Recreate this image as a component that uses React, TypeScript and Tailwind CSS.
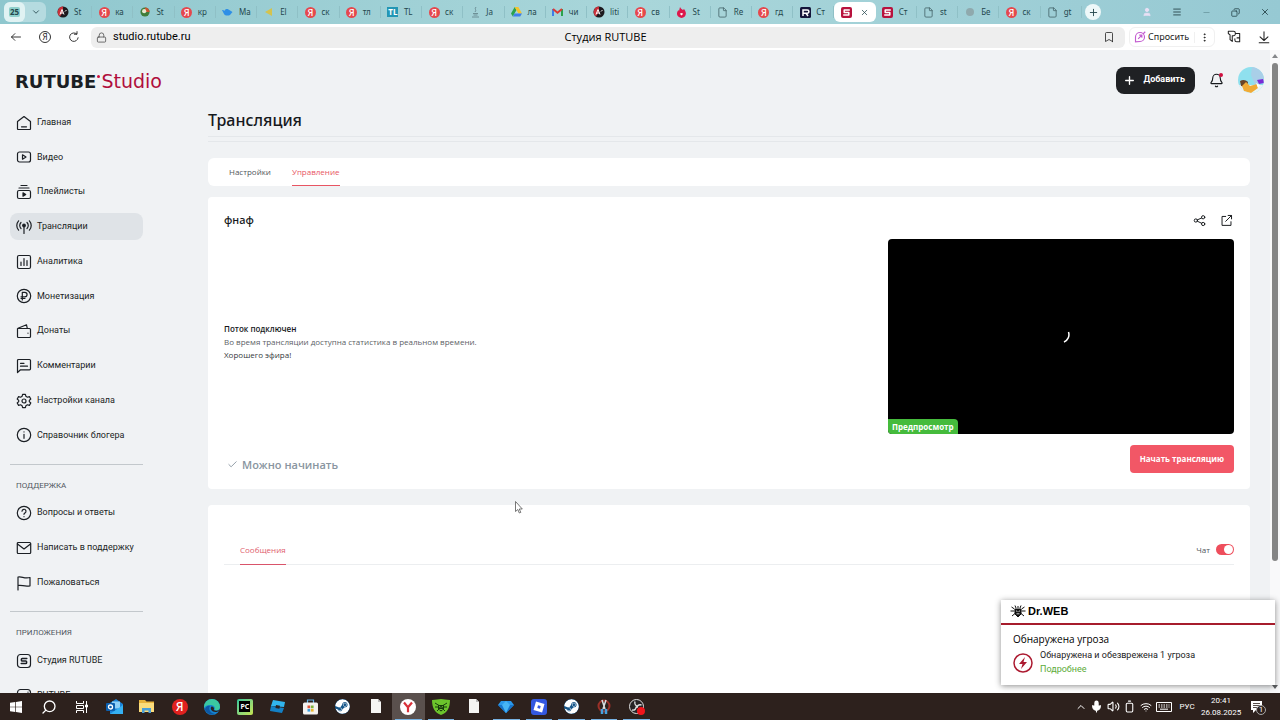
import type { ReactNode } from "react";
import {
  Battery,
  Bell,
  Bookmark,
  Check,
  ChevronDown,
  ChevronUp,
  Copy,
  EllipsisVertical,
  File,
  Lock,
  Menu,
  Mic,
  Minus,
  Plus,
  Search,
  User,
  Volume2,
  Wifi,
  X,
} from "lucide-react";
import { FaSteam } from "react-icons/fa";

const Line = ({ children, size = 16 }: { children: ReactNode; size?: number }) => (
  <svg
    width={size}
    height={size}
    viewBox="0 0 16 16"
    fill="none"
    stroke="currentColor"
    strokeWidth="1.2"
    strokeLinecap="round"
    strokeLinejoin="round"
    className="shrink-0"
    aria-hidden="true"
  >
    {children}
  </svg>
);

const Ya = ({ big = false }: { big?: boolean }) => (
  <span
    className={
      big
        ? "flex size-4 items-center justify-center rounded-full bg-[#e0211f] text-[12px] leading-none font-medium text-white"
        : "flex size-[11px] items-center justify-center rounded-full bg-[#e5484d] text-[9px] leading-none font-medium text-white"
    }
  >
    Я
  </span>
);

const Anime = () => (
  <svg width="12" height="12" viewBox="0 0 12 12" aria-hidden="true">
    <circle cx="6" cy="6" r="5.5" fill="#1d1a1e" />
    <path d="M6 .5a5.500 5.500 0 0 0-3 10L6 6z" fill="#c8313a" />
    <path d="M3 8.500 5 3.500l2 5M3.800 7h2.500M8 5.500l1.500-1.500" stroke="#fff" fill="none" />
  </svg>
);

const Globe = () => (
  <svg width="10" height="10" viewBox="0 0 12 12" aria-hidden="true">
    <circle cx="6" cy="6" r="5.500" fill="#3f7d3a" />
    <path d="M6 .5A5.500 5.500 0 0 1 11.500 6L6 6z" fill="#c9542f" />
    <circle cx="5" cy="5" r="2.500" fill="#e8e6cf" />
  </svg>
);

const RutubeR = () => (
  <svg width="11" height="11" viewBox="0 0 11 11" aria-hidden="true">
    <rect width="11" height="11" rx="1.500" fill="#14153a" />
    <path d="M3 9V3h4.300a1.300 1.300 0 0 1 0 3.200H3M6 6.200 8 9" fill="none" stroke="#fff" strokeWidth="1.500" />
  </svg>
);

const StudioS = () => (
  <svg width="11" height="11" viewBox="0 0 11 11" aria-hidden="true">
    <rect width="11" height="11" rx="2" fill="#b8123d" />
    <path d="M8.800 3H3.200v2.500h4.600V8H2.200" fill="none" stroke="#fff" strokeWidth="1.500" strokeLinejoin="round" />
  </svg>
);

const PageIcon = () => <File size={11} strokeWidth={1.800} className="text-[#45656a]" />;

const browserTabs: { icon: ReactNode; text: string; active?: boolean }[] = [
  { icon: <Anime />, text: "St" },
  { icon: <Ya />, text: "ка" },
  { icon: <Globe />, text: "St" },
  { icon: <Ya />, text: "кр" },
  {
    icon: (
      <svg width="11" height="9" viewBox="0 0 11 9" aria-hidden="true">
        <path d="M0 2c1 0 2 .3 2.500 1C3 1 5 .5 6.500 1.500L10.500 4 8 7c-2 1-5 .8-6-1z" fill="#2f8fe6" />
      </svg>
    ),
    text: "Ма",
  },
  {
    icon: (
      <svg width="8" height="8" viewBox="0 0 8 8" aria-hidden="true">
        <path d="M7 0v8L0 4z" fill="#d4c34e" />
      </svg>
    ),
    text: "El",
  },
  { icon: <Ya />, text: "ск" },
  { icon: <Ya />, text: "тл" },
  {
    icon: (
      <span className="flex h-[10px] w-[11px] items-center justify-center bg-[#2396b4] text-[8px] leading-none font-bold text-white">
        TL
      </span>
    ),
    text: "TL",
  },
  { icon: <Ya />, text: "ск" },
  {
    icon: (
      <svg width="9" height="11" viewBox="0 0 9 11" fill="none" stroke="#66888e" strokeWidth=".9" aria-hidden="true">
        <path d="M5 0C3 2 6 3 4 5M2 6.500h5M2.500 8h4M1 10h7" />
      </svg>
    ),
    text: "Ja",
  },
  {
    icon: (
      <svg width="11" height="10" viewBox="0 0 11 10" aria-hidden="true">
        <path d="M3.700 0 0 6.500 1.800 9.500 5.500 3z" fill="#2ba24c" />
        <path d="M3.700 0h3.600L11 6.500H7.400z" fill="#f5c32c" />
        <path d="M3.600 6.500H11l-1.800 3H1.800z" fill="#3f7ee8" />
      </svg>
    ),
    text: "ла",
  },
  {
    icon: (
      <svg width="11" height="8" viewBox="0 0 11 8" fill="none" strokeWidth="2" aria-hidden="true">
        <path d="M1 8V1" stroke="#3f7ee8" />
        <path d="M10 8V1" stroke="#2ba24c" />
        <path d="m1 1 4.500 3.800L10 1" stroke="#dc3a35" />
      </svg>
    ),
    text: "чи",
  },
  { icon: <Anime />, text: "liti" },
  { icon: <Ya />, text: "св" },
  {
    icon: (
      <svg width="9" height="11" viewBox="0 0 9 11" aria-hidden="true">
        <path d="M3 0c1 2 2 2 3 3l1-1c4 5 1 9-2.500 9S-2 7 1.500 3L2 4z" fill="#dd174b" />
        <path d="M4.500 8.500 2.800 6.800 4.500 6l1.700.8z" fill="#fff" />
      </svg>
    ),
    text: "St",
  },
  { icon: <PageIcon />, text: "Re" },
  { icon: <Ya />, text: "гд" },
  { icon: <RutubeR />, text: "Ст" },
  { icon: <StudioS />, text: "", active: true },
  { icon: <StudioS />, text: "Ст" },
  { icon: <PageIcon />, text: "st" },
  { icon: <span className="size-2 rounded-full bg-[#8fa9ad]" />, text: "Бе" },
  { icon: <Ya />, text: "ск" },
  { icon: <PageIcon />, text: "gt" },
];

const menu: { text: string; icon: ReactNode; active?: boolean }[] = [
  {
    text: "Главная",
    icon: <path d="M1.500 6.500 8 1.500l6.500 5v7.300a.7.700 0 0 1-.7.700H2.200a.7.700 0 0 1-.7-.7zM5.500 11.800h5" />,
  },
  {
    text: "Видео",
    icon: (
      <>
        <rect x="1.500" y="3" width="13" height="10" rx="2" />
        <path d="M6.500 5.800v4.400L10 8z" />
      </>
    ),
  },
  {
    text: "Плейлисты",
    icon: (
      <>
        <rect x="1.500" y="6.500" width="13" height="8" rx="1.500" />
        <path d="M3 4h10M5 1.500h6" />
        <path d="M7 8.800v3.400L9.700 10.500z" fill="currentColor" />
      </>
    ),
  },
  {
    text: "Трансляции",
    active: true,
    icon: (
      <>
        <circle cx="8" cy="6.500" r="1.300" fill="currentColor" />
        <path d="M8 7v7.500M5 9.500a4.200 4.200 0 0 1 0-6M11 9.500a4.200 4.200 0 0 0 0-6M2.600 11.200a7 7 0 0 1 0-9.400M13.400 11.200a7 7 0 0 0 0-9.400" />
      </>
    ),
  },
  {
    text: "Аналитика",
    icon: (
      <>
        <rect x="1.500" y="1.500" width="13" height="13" rx="1.500" />
        <path d="M5 8v3.500M8 4.500v7M11 6.500v5" />
      </>
    ),
  },
  {
    text: "Монетизация",
    icon: (
      <>
        <circle cx="8" cy="8" r="6.700" />
        <path d="M6.300 12V4.300h2.500a2.200 2.200 0 0 1 0 4.500H5M5 10.500h4" />
      </>
    ),
  },
  {
    text: "Донаты",
    icon: (
      <>
        <path d="M1.500 5.500h12a1 1 0 0 1 1 1v7a1 1 0 0 1-1 1h-11a1 1 0 0 1-1-1zM2 5.300l8.500-3.500.8 3.500M12 10v.2" />
      </>
    ),
  },
  {
    text: "Комментарии",
    icon: <path d="M1.500 14.500V2.500a1 1 0 0 1 1-1h11a1 1 0 0 1 1 1v8.300a1 1 0 0 1-1 1H4.500zM4.500 5.300H8M4.500 8.200h7" />,
  },
  {
    text: "Настройки канала",
    icon: (
      <>
        <path d="M6.600 1.300h2.800l.5 2 1.500.9 2-.6 1.400 2.400-1.500 1.400v1.200l1.500 1.400-1.400 2.400-2-.6-1.500.9-.5 2H6.600l-.5-2-1.500-.9-2 .6L1.200 10l1.500-1.400V7.400L1.200 6l1.400-2.400 2 .6 1.500-.9z" />
        <circle cx="8" cy="8" r="2" />
      </>
    ),
  },
  {
    text: "Справочник блогера",
    icon: (
      <>
        <circle cx="8" cy="8" r="6.700" />
        <path d="M8 7.300v4M8 4.800v.2" />
      </>
    ),
  },
];

const support: { text: string; icon: ReactNode }[] = [
  {
    text: "Вопросы и ответы",
    icon: (
      <>
        <circle cx="8" cy="8" r="6.700" />
        <path d="M6 6.200a2 2 0 1 1 2.800 1.900c-.6.300-.8.600-.8 1.200M8 11.500v.2" />
      </>
    ),
  },
  {
    text: "Написать в поддержку",
    icon: (
      <>
        <rect x="1.300" y="2.500" width="13.400" height="11" rx="1" />
        <path d="m1.500 4 6.500 5 6.500-5" />
      </>
    ),
  },
  {
    text: "Пожаловаться",
    icon: <path d="M2 15V2c4-1 6 2 12 .5v8.300c-6 1.200-8-1.300-12-.3" />,
  },
];

const apps: { text: string; icon: ReactNode }[] = [
  {
    text: "Студия RUTUBE",
    icon: (
      <>
        <rect x="1.500" y="1.500" width="13" height="13" rx="3" />
        <path d="M10.800 5.500H6.200a.8.800 0 0 0-.8.800v.9c0 .4.400.8.800.8h3.600c.4 0 .8.400.8.800v.9c0 .4-.4.800-.8.800H5.200" strokeWidth="1.500" />
      </>
    ),
  },
  {
    text: "RUTUBE",
    icon: (
      <>
        <rect x="1.500" y="1.500" width="13" height="13" rx="3" />
        <path d="M5 11V5.500h4.500a1.500 1.500 0 0 1 0 3H5M8.500 8.500 11 11M12 4v.2" />
      </>
    ),
  },
];

const SideItem = ({ text, icon, active }: { text: string; icon: ReactNode; active?: boolean }) => (
  <a
    href="#"
    className={
      active
        ? "flex h-[27px] shrink-0 items-center gap-[5px] rounded-lg bg-[#dfe3e7] pl-[6px]"
        : "flex h-[27px] shrink-0 items-center gap-[5px] pl-[6px]"
    }
  >
    <Line>{icon}</Line>
    <span className="whitespace-nowrap">{text}</span>
  </a>
);

const Doc = () => (
  <svg width="12" height="15" viewBox="0 0 12 15" aria-hidden="true">
    <path d="M1 0h7l3 3v11H1z" fill="#f5f5f3" />
    <path d="M8 0v3h3" fill="#bbb" />
  </svg>
);

const Steam = () => <FaSteam size={15} className="rounded-full bg-[#15568a] text-white" />;

const taskbar: { name: string; icon: ReactNode; open?: boolean; active?: boolean }[] = [
  {
    name: "Пуск",
    icon: (
      <svg width="12" height="12" viewBox="0 0 12 12" fill="#fff" aria-hidden="true">
        <path d="M0 1.700 5.300 1v4.700H0zM6 .9 12 0v5.700H6zM0 6.300h5.300V11L0 10.300zM6 6.300h6V12l-6-.9z" />
      </svg>
    ),
  },
  { name: "Поиск", icon: <Search size={16} className="-scale-x-100 text-white" /> },
  {
    name: "Задачи",
    icon: (
      <svg width="12" height="12" viewBox="0 0 12 12" fill="none" stroke="#fff" aria-hidden="true">
        <path d="M.5 0v2.500h7V0M.5 12V9.500h7V12M.5 4.500h7v3h-7zM10.500 0v12" />
        <path d="M9.500 4h2v2h-2z" fill="#fff" />
      </svg>
    ),
  },
  {
    name: "Outlook",
    icon: (
      <svg width="17" height="16" viewBox="0 0 17 16" aria-hidden="true">
        <path d="M4 4 10 0l7 5v10H4z" fill="#1b83d8" />
        <path d="M6 2.500h8v7H6z" fill="#8fd0f7" />
        <path d="m4 15 13-9v9z" fill="#35b0f2" />
        <rect y="4" width="9" height="8" rx="1" fill="#0c5fae" />
        <circle cx="4.500" cy="8" r="2" fill="none" stroke="#fff" strokeWidth="1.300" />
      </svg>
    ),
  },
  {
    name: "Проводник",
    icon: (
      <svg width="15" height="13" viewBox="0 0 15 13" aria-hidden="true">
        <path d="M0 0h6l1.500 1.500H15V12H0z" fill="#e9b33c" />
        <path d="M0 3h15v9H0z" fill="#fbdc7c" />
        <path d="M3 13V8h9v5h-2.500v-2.500h-4V13z" fill="#4b9fd8" />
      </svg>
    ),
  },
  { name: "Яндекс", icon: <Ya big /> },
  {
    name: "Edge",
    icon: (
      <svg width="16" height="16" viewBox="0 0 16 16" aria-hidden="true">
        <circle cx="8" cy="8" r="8" fill="#1583cf" />
        <path d="M0 8a8 8 0 0 1 16 0c0 3-3 4-5.500 3.200 1.500-3-1-5.200-4-5.200C3 6 1 7 0 9z" fill="#3bc8a0" />
        <path d="M6 7c-2 3 0 7 5 8-3 1.500-8 0-10-4 0-3 3-5 5-4z" fill="#0d57a3" />
        <path d="M7.500 7.500c2 0 3 1.500 2.300 3.500 1.500 1 4 .8 5.500-.3-1 3-6.500 3-8 .3-.8-1.300-.6-2.700.2-3.500z" fill="#2a2120" />
      </svg>
    ),
  },
  {
    name: "PyCharm",
    icon: (
      <span className="flex size-4 items-center justify-center rounded-xs bg-linear-to-br from-[#20c79a] to-[#c5e34a]">
        <span className="flex size-[11px] items-center justify-center bg-black text-[7px] leading-none font-bold text-white">PC</span>
      </span>
    ),
  },
  {
    name: "Roblox Studio",
    icon: (
      <svg width="15" height="15" viewBox="0 0 15 15" aria-hidden="true">
        <path d="m3 1 12 2-1 5-13-1z" fill="#31b5ee" />
        <path d="m1 7 13 2-2 5-12-2z" fill="#1380c5" />
        <path d="m6 6 4 .7-.6 3-4-.7z" fill="#2a2120" />
      </svg>
    ),
  },
  {
    name: "Store",
    icon: (
      <svg width="15" height="16" viewBox="0 0 15 16" aria-hidden="true">
        <path d="M4.500 4V1h6v3" fill="none" stroke="#64b6e9" strokeWidth="1.200" />
        <rect y="3.500" width="15" height="12" rx="1.500" fill="#f4f2ef" />
        <path d="M4.500 6.500h2.700v2.700H4.500z" fill="#e2553a" />
        <path d="M7.900 6.500h2.700v2.700H7.900z" fill="#7db43c" />
        <path d="M4.500 9.900h2.700v2.700H4.500z" fill="#3a9fe0" />
        <path d="M7.900 9.900h2.700v2.700H7.900z" fill="#eeb72c" />
      </svg>
    ),
  },
  { name: "Steam", icon: <Steam /> },
  { name: "Документ", icon: <Doc /> },
  {
    name: "Yandex Browser",
    active: true,
    open: true,
    icon: (
      <svg width="16" height="16" viewBox="0 0 16 16" aria-hidden="true">
        <circle cx="8" cy="8" r="8" fill="#fff" />
        <path d="m4 3.500 4 4.800v5M12 3.500 8 8.300" fill="none" stroke="#d9313a" strokeWidth="2.200" />
      </svg>
    ),
  },
  {
    name: "Dr.Web",
    open: true,
    icon: (
      <svg width="18" height="16" viewBox="0 0 18 16" aria-hidden="true">
        <path d="M0 1c4 0 6-1 9-1s5 1 9 1c0 8-3 13-9 15C3 14 0 9 0 1z" fill="#6cc42c" />
        <path d="m3 4 4 2.500M15 4l-4 2.500M3 8h3M15 8h-3M5 12l2-2M13 12l-2-2" stroke="#173d0a" />
        <path d="M6 6h6v4l-3 2.500L6 10z" fill="#173d0a" />
        <path d="m7 7.500 1.500.7M11 7.500l-1.500.7M7.500 10.500h3" stroke="#8fe04c" strokeWidth=".8" />
      </svg>
    ),
  },
  { name: "Файл", icon: <Doc /> },
  {
    name: "Diamond",
    open: true,
    icon: (
      <svg width="16" height="12" viewBox="0 0 16 12" aria-hidden="true">
        <path d="M3 0h10l3 4-8 8-8-8z" fill="#2a98ec" />
        <path d="M0 4h16l-8 8z" fill="#1573cc" />
        <path d="m4 4 4-4 4 4-4 8z" fill="#47b4f5" />
      </svg>
    ),
  },
  {
    name: "Roblox",
    open: true,
    icon: (
      <svg width="16" height="16" viewBox="0 0 16 16" aria-hidden="true">
        <rect width="16" height="16" rx="3" fill="#3358e0" />
        <path d="m5 2.500 8.500 2.400-2.400 8.600-8.600-2.400z" fill="#fff" />
        <path d="m7 6.300 2.700.7L9 9.700 6.300 9z" fill="#3358e0" />
      </svg>
    ),
  },
  { name: "Steam", open: true, icon: <Steam /> },
  {
    name: "Snip",
    open: true,
    icon: (
      <svg width="14" height="16" viewBox="0 0 14 16" aria-hidden="true">
        <circle cx="7" cy="7" r="5.500" fill="none" stroke="#9c3028" strokeWidth="2" />
        <path d="m5 1 3 9M9 1 6 10" stroke="#d9dde0" strokeWidth="1.500" />
        <path d="M5 10v5M9 10v5" stroke="#47a0dd" strokeWidth="2.500" />
      </svg>
    ),
  },
  {
    name: "OBS",
    open: true,
    icon: (
      <svg width="16" height="16" viewBox="0 0 16 16" aria-hidden="true">
        <circle cx="7.500" cy="7.500" r="7" fill="#252325" stroke="#dedede" />
        <path d="M6 2.500c-1 3 1 4.500 3 5M12.500 6c-3-1-4.500 1-4.500 3M3 11c2.500.5 4.500-1 4-3.500" fill="none" stroke="#dedede" strokeWidth="1.400" />
        <circle cx="12" cy="12" r="4" fill="#f0151c" />
      </svg>
    ),
  },
];

const TabStrip = () => (
  <div className="flex h-6 shrink-0 items-center bg-linear-to-r from-[#8fc7ce] via-[#a9d6da] to-[#96c9d3] text-[8px] text-[#24474d]">
    <div className="ml-1 flex h-5 w-[42px] shrink-0 items-center rounded-md bg-[#b5dbe0]">
      <button className="flex h-5 w-[21px] items-center justify-center rounded-md bg-[#e0f2f3]">
        <span className="rounded-xs bg-[#8fcfcb] px-px leading-[10px] font-bold">25</span>
      </button>
      <button className="flex flex-1 justify-center" aria-label="Группы">
        <ChevronDown size={10} />
      </button>
    </div>
    <div className="ml-[5px] flex flex-1 items-center">
      {browserTabs.map(({ icon, text, active }, i) => (
        <div
          key={i}
          className={
            active
              ? "flex h-5 w-0 flex-1 items-center gap-2 rounded-md bg-white pl-[6px]"
              : "flex h-5 w-0 flex-1 items-center gap-[5px] pl-[6px]"
          }
        >
          <span className="flex w-3 shrink-0 justify-center">{icon}</span>
          {active ? (
            <button aria-label="Закрыть вкладку">
              <X size={9} />
            </button>
          ) : (
            <>
              <span className="whitespace-nowrap">{text}</span>
              <span className="ml-auto h-3 w-px bg-[#8fc0c6]" />
            </>
          )}
        </div>
      ))}
    </div>
    <button className="ml-[3px] flex size-4 items-center justify-center rounded-full bg-[#eef8f9]" aria-label="Новая вкладка">
      <Plus size={11} />
    </button>
    <div className="ml-[41px] flex w-[138px] items-center justify-between pr-[10px] text-[#1f3b40]">
      <User size={10} fill="#e9e0f5" className="text-[#e9e0f5]" />
      <Menu size={10} />
      <Minus size={9} className="text-[#67949c]" />
      <Copy size={9} className="-scale-x-100" />
      <X size={10} />
    </div>
  </div>
);

const AddressBar = () => (
  <div className="flex h-[26px] shrink-0 items-center bg-white text-[#222]">
    <div className="flex w-[91px] shrink-0 items-center gap-[17px] pl-[10px]">
      <button aria-label="Назад">
        <Line size={12}>
          <path d="M14 8H2M6.500 3.500 2 8l4.500 4.500" />
        </Line>
      </button>
      <button className="flex size-3 items-center justify-center rounded-full border border-[#333] text-[8px] leading-none" aria-label="Яндекс">
        Я
      </button>
      <button aria-label="Обновить">
        <Line size={12}>
          <path d="M13.500 9A5.700 5.700 0 1 1 11.500 3.800M8.500 4.300h3.500V.8" />
        </Line>
      </button>
    </div>
    <div className="flex h-[21px] min-w-0 flex-1 items-center rounded-md bg-[#eeeeee] pr-[10px] pl-[5px]">
      <div className="flex w-0 flex-1 items-center gap-[6px]">
        <Lock size={11} strokeWidth={1.800} className="shrink-0 text-[#555]" />
        <input
          aria-label="Адрес"
          defaultValue="studio.rutube.ru"
          className="w-0 flex-1 bg-transparent font-[Roboto,sans-serif] text-[11px] text-black outline-none"
        />
      </div>
      <span className="font-['Open_Sans',sans-serif] text-[11px] text-black">Студия RUTUBE</span>
      <span className="flex w-0 flex-1 justify-end">
        <Bookmark size={12} strokeWidth={1.600} />
      </span>
    </div>
    <div className="ml-1 flex h-5 w-[86px] shrink-0 items-center rounded-md border border-[#f0f0f0] pl-1">
      <svg width="12" height="12" viewBox="0 0 16 16" fill="none" stroke="#c35bd0" strokeWidth="1.500" aria-hidden="true">
        <path d="M2 14.500V8a6 6 0 1 1 6 6zM5.500 10.500l5-5M7 5.500h3.500V9M12 4l3-3" />
      </svg>
      <button className="ml-[2px] text-[9px]">Спросить</button>
      <button className="ml-auto border-l border-[#f0f0f0] px-1" aria-label="Ещё">
        <EllipsisVertical size={11} />
      </button>
    </div>
    <button className="ml-3 shrink-0" aria-label="Отзывы">
      <Line size={14}>
        <path d="M1.500 1.500h6a2 2 0 0 1 2 2v1a2 2 0 0 1-2 2H6V13L3.500 11V5.500L1.500 4zM9.500 4h5v9.500h-3.500a2 2 0 0 1-2-2V10M11.500 9h3" />
      </Line>
    </button>
    <button className="mr-[9px] ml-4 shrink-0" aria-label="Загрузки">
      <Line size={14}>
        <path d="M8 2v10M3.500 7.800 8 12l4.500-4.200M2.500 14.500h11" />
      </Line>
    </button>
  </div>
);

const Sidebar = () => (
  <aside className="w-[208px] shrink-0 overflow-hidden font-[Roboto,sans-serif] text-[9px] text-[#1b1f24]">
    <a
      href="#"
      className="mt-[17px] ml-[15px] flex h-7 items-baseline font-['DejaVu_Sans',sans-serif] text-[18px] font-bold"
    >
      RUTUBE
      <span className="mx-px size-[3px] -translate-y-[10px] rounded-full bg-[#d0103f]" />
      <span className="text-[19px] font-normal text-[#b00f3c]">Studio</span>
    </a>
    <div className="ml-[10px] w-[133px]">
      <nav className="mt-[14px] flex h-[340px] flex-col justify-between">
        {menu.map((item) => (
          <SideItem key={item.text} {...item} />
        ))}
      </nav>
      <hr className="mt-[15px] border-[#c3c8cc]" />
      <h3 className="mt-[14px] ml-[6px] text-[8px] leading-[14px] text-[#51585f]">ПОДДЕРЖКА</h3>
      <nav className="mt-[6px] flex flex-col gap-2">
        {support.map((item) => (
          <SideItem key={item.text} {...item} />
        ))}
      </nav>
      <hr className="mt-[15px] border-[#c3c8cc]" />
      <h3 className="mt-[14px] ml-[6px] text-[8px] leading-[14px] text-[#51585f]">ПРИЛОЖЕНИЯ</h3>
      <nav className="mt-[7px] flex flex-col gap-2">
        {apps.map((item) => (
          <SideItem key={item.text} {...item} />
        ))}
      </nav>
    </div>
  </aside>
);

const Avatar = () => (
  <svg width="26" height="26" viewBox="0 0 26 26" aria-hidden="true">
    <clipPath id="face">
      <circle cx="13" cy="13" r="13" />
    </clipPath>
    <g clipPath="url(#face)">
      <rect width="26" height="26" fill="#8fe0ee" />
      <path d="M14 0h12v15l-9 3-4-10z" fill="#a9cfe8" />
      <path d="M0 18h26v8H0z" fill="#e9f4f5" />
      <path d="M2 14c3-2 6-1 8 1l-1 5-6-1z" fill="#6a4426" />
      <path d="m4 19 4-4 4 4 7-2 1 4-7 5-7-2z" fill="#f0ab35" />
      <path d="m19 13 6-1 1 4-5 1z" fill="#7a2bd6" />
      <path d="m18 16 4 2-2 3z" fill="#fff" />
    </g>
  </svg>
);

const StreamCard = () => (
  <section className="mt-[11px] rounded-sm bg-white px-4 pt-3 pb-4">
    <div className="flex h-[22px] items-center">
      <h2 className="font-['Noto_Sans',sans-serif] text-[11px] font-medium">фнаф</h2>
      <button className="mr-[14px] ml-auto" aria-label="Поделиться">
        <Line size={13}>
          <circle cx="3.500" cy="8" r="2" />
          <circle cx="12.500" cy="4" r="2" />
          <circle cx="12.500" cy="12.300" r="2" />
          <path d="m5.400 7.200 5.200-2.300M5.400 8.900l5.200 2.500" />
        </Line>
      </button>
      <button className="mr-px" aria-label="Открыть">
        <Line size={13}>
          <path d="M7 3H2.500v11h11V9.500M7 9l7-7M10 1.800h4.200V6" />
        </Line>
      </button>
    </div>
    <div className="mt-2 flex items-center justify-between">
      <div className="pt-[10px] text-[8px] leading-[13px] text-[#5c6166]">
        <h3 className="font-semibold text-[#16191c]">Поток подключен</h3>
        <p>Во время трансляции доступна статистика в реальном времени.</p>
        <p className="text-[#33373b]">Хорошего эфира!</p>
      </div>
      <div className="relative flex aspect-video w-[346px] items-center justify-center rounded-sm bg-black text-white">
        <svg width="18" height="18" viewBox="0 0 18 18" fill="none" stroke="currentColor" strokeWidth="1.500" aria-hidden="true">
          <path d="M16.500 5a8 8 0 0 1-4.500 10" />
        </svg>
        <span className="absolute bottom-0 left-0 rounded-tr-sm rounded-bl-sm bg-[#45bb3c] px-1 text-[8px] leading-[15px] font-bold">
          Предпросмотр
        </span>
      </div>
    </div>
    <div className="mt-[11px] flex items-start justify-between">
      <p className="mt-3 ml-[3px] flex items-center gap-1 text-[11px] leading-4 font-semibold text-[#8995a0]">
        <Check size={11} strokeWidth={2} />
        Можно начинать
      </p>
      <button className="h-7 rounded-sm bg-[#f25766] px-[10px] text-[8px] font-bold text-white">
        Начать трансляцию
      </button>
    </div>
  </section>
);

const Main = () => (
  <main className="flex min-w-0 flex-1 flex-col font-['Open_Sans',sans-serif] text-[#16191c]">
    <header className="mt-4 mr-[6px] flex h-7 shrink-0 items-center justify-end">
      <button className="flex h-[27px] items-center gap-[7px] rounded-lg bg-[#1f2124] px-[7px] pr-[10px] font-[Roboto,sans-serif] text-[9px] font-bold text-white">
        <Plus size={13} strokeWidth={2.500} />
        Добавить
      </button>
      <button className="relative ml-[14px]" aria-label="Уведомления">
        <Bell size={15} strokeWidth={1.800} />
        <span className="absolute top-0 right-px size-1 rounded-full bg-[#d0103f]" />
      </button>
      <button className="ml-[14px]" aria-label="Профиль">
        <Avatar />
      </button>
    </header>
    <div className="mr-5 flex min-h-0 flex-1 flex-col">
      <h1 className="mt-[14px] shrink-0 font-['Noto_Sans',sans-serif] text-[16px] leading-6 font-medium">
        Трансляция
      </h1>
      <div className="mt-1 h-[6px] shrink-0 border-y border-[#e4e7ea]" />
      <div className="mt-4 flex h-7 shrink-0 gap-[21px] rounded-md bg-white pl-[21px] text-[8px]">
        <button className="text-[#51565b]">Настройки</button>
        <button className="border-b border-[#e85563] text-[#e85563]">Управление</button>
      </div>
      <StreamCard />
      <section className="mt-4 min-h-0 flex-1 rounded-t-sm bg-white px-4 pt-[31px] text-[8px]">
        <div className="flex h-[29px] justify-between border-b border-[#eceef0] pl-4">
          <button className="-mb-px border-b border-[#d9536a] text-[#e0606d]">Сообщения</button>
          <label className="flex items-center gap-[6px] text-[#51565b]">
            Чат
            <input type="checkbox" role="switch" defaultChecked className="peer sr-only" />
            <span className="flex h-[11px] w-[18px] items-center justify-start rounded-full bg-[#b9bec3] p-px peer-checked:justify-end peer-checked:bg-[#ee4e5c]">
              <span className="size-[9px] rounded-full bg-white" />
            </span>
          </label>
        </div>
      </section>
    </div>
  </main>
);

const Scrollbar = () => (
  <div className="flex w-[10px] shrink-0 flex-col items-center bg-[#f9f9fa]">
    <svg width="6" height="4" viewBox="0 0 6 4" className="mt-1" aria-hidden="true">
      <path d="m0 4 3-4 3 4z" fill="#85878a" />
    </svg>
    <div className="mt-[5px] h-[498px] w-[6px] rounded-full bg-[#858585]" />
    <svg width="6" height="4" viewBox="0 0 6 4" className="mt-auto mb-1" aria-hidden="true">
      <path d="m0 0 3 4 3-4z" fill="#606265" />
    </svg>
  </div>
);

const Toast = () => (
  <div className="absolute right-[5px] bottom-2 h-[85px] w-[274px] bg-white font-['Open_Sans',sans-serif] text-[#222] shadow-[0_1px_6px_rgba(0,0,0,0.45)]">
    <div className="flex h-[25px] items-center gap-[2px] border-b-2 border-[#a61c2c] pl-[9px] font-['Liberation_Sans',sans-serif] text-[11px] font-black text-black">
      <svg width="16" height="13" viewBox="0 0 16 13" fill="none" stroke="#111" aria-hidden="true">
        <path d="M5 4h6v5l-3 3-3-3z" fill="#111" />
        <path d="m4.500 4-3-2M11.500 4l3-2M4.500 6H.500M11.500 6h4M5 8.500 2 11M11 8.500l3 2.500M6 3 5 .5M10 3l1-2.500M8 3V1" />
        <path d="m6 5.800 1.500.8M10 5.800l-1.500.8M6.500 8.800h3" stroke="#fff" strokeWidth=".8" />
      </svg>
      Dr.WEB
    </div>
    <h4 className="mt-[7px] ml-3 text-[10px] leading-[14px] text-black">Обнаружена угроза</h4>
    <div className="ml-3 flex items-center gap-[7px]">
      <svg width="20" height="20" viewBox="0 0 20 20" className="mt-[3px]" aria-hidden="true">
        <circle cx="10" cy="10" r="9" fill="none" stroke="#ac1a30" strokeWidth="1.500" />
        <path d="M12 4 6 11h3.500L8 16l6-7h-3.500z" fill="#ac1a30" />
      </svg>
      <div className="font-[Roboto,sans-serif] text-[9px] leading-[14px]">
        <p className="mt-[2px]">Обнаружена и обезврежена 1 угроза</p>
        <a href="#" className="block text-[#5cab38]">
          Подробнее
        </a>
      </div>
    </div>
  </div>
);

const Taskbar = () => (
  <footer className="flex h-[27px] shrink-0 bg-[#2d211d] text-[8px] text-white">
    <div className="flex w-[653px] shrink-0">
      {taskbar.map(({ name, icon, open, active }, i) => (
        <button
          key={i}
          aria-label={name}
          className={
            active
              ? "relative flex flex-1 items-center justify-center bg-[#5a504d]"
              : "relative flex flex-1 items-center justify-center"
          }
        >
          {icon}
          {open && <span className="absolute inset-x-[3px] bottom-0 h-px bg-[#78b3e3]" />}
        </button>
      ))}
    </div>
    <div className="ml-auto flex items-center pr-4 font-[Roboto,sans-serif]">
      <ChevronUp size={12} />
      <Mic size={13} className="ml-[3px]" fill="currentColor" />
      <Volume2 size={13} className="ml-1" />
      <Battery size={13} className="ml-[3px] -rotate-90" />
      <Wifi size={12} className="ml-1" />
      <svg width="16" height="10" viewBox="0 0 16 10" fill="none" stroke="currentColor" className="ml-1" aria-hidden="true">
        <path d="M.5.5h15v9H.5z" />
        <path d="M2.500 3h11M2.500 5h11" strokeDasharray="1.500 1" />
        <path d="M4 7.200h8" />
      </svg>
      <span className="ml-[6px] w-[18px] text-center">РУС</span>
      <div className="ml-[5px] w-[40px] text-center leading-3 whitespace-nowrap">
        <p>20:41</p>
        <p>26.08.2025</p>
      </div>
      <span className="relative ml-[9px] flex">
        <svg width="14" height="14" viewBox="0 0 14 14" aria-hidden="true">
          <path d="M1 1h11v9H6l-3 3v-3H1z" fill="#fff" />
          <path d="M3 3.500h7M3 5.500h7M3 7.500h4" stroke="#2d211d" strokeWidth=".8" />
        </svg>
        <span className="absolute top-[5px] left-[6px] flex size-[10px] items-center justify-center rounded-full border border-[#aaa] bg-[#2d211d] text-[8px] leading-none">
          1
        </span>
      </span>
    </div>
  </footer>
);

const App = () => {
  return (
    <div className="flex h-screen w-full flex-col overflow-hidden bg-[#f0f2f4] font-['Noto_Sans',sans-serif]">
      <TabStrip />
      <AddressBar />
      <div className="relative flex min-h-0 flex-1">
        <Sidebar />
        <Main />
        <Scrollbar />
        <Toast />
        <svg width="8" height="13" viewBox="0 0 8 13" className="absolute top-[451px] left-[515px]" aria-hidden="true">
          <path d="M.5.5v10l2.300-2 1.500 3.500 1.500-.6L4.300 8h3z" fill="#fff" stroke="#555" strokeWidth=".8" />
        </svg>
      </div>
      <Taskbar />
    </div>
  );
};

export default App;
